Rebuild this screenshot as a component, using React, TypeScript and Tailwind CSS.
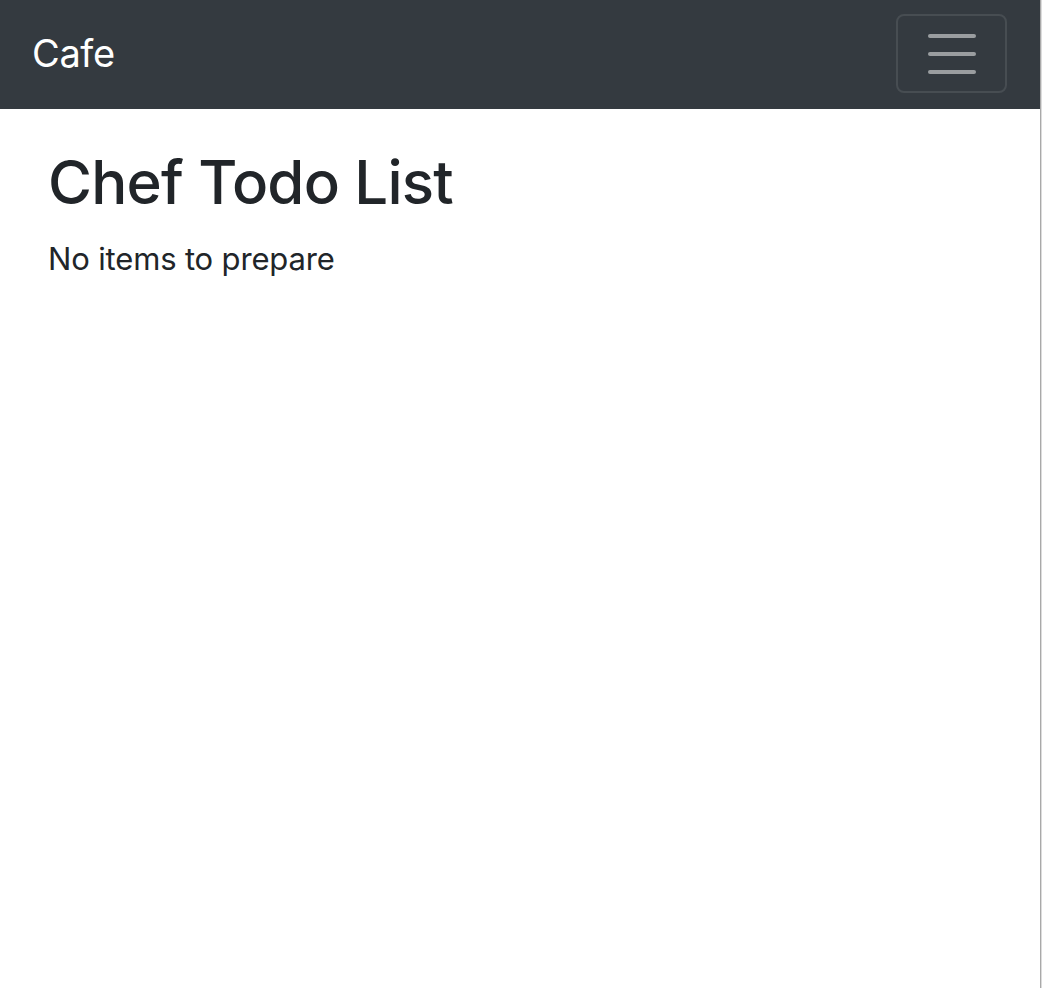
export default function App() {
  return (
    <div className="flex h-[988px] w-[1042px] bg-white" style={{ fontFamily: "Inter, 'Noto Sans', sans-serif" }}>
      <div className="flex-1 flex flex-col">
        <nav className="h-[109px] bg-[#343a40] flex items-center justify-between pl-[32px] pr-[33px]">
          <a className="text-white text-[38px] leading-none tracking-[-0.01em] pb-[4px]">Cafe</a>
          <button className="w-[111px] h-[79px] mb-[2px] rounded-[8px] border-2 border-[#474d52] flex flex-col items-center justify-center gap-[14px]">
            <span className="block w-[48px] h-[4px] rounded-full bg-[#9a9da0]" />
            <span className="block w-[48px] h-[4px] rounded-full bg-[#9a9da0]" />
            <span className="block w-[48px] h-[4px] rounded-full bg-[#9a9da0]" />
          </button>
        </nav>
        <main className="px-[48px] pt-[43px] text-[#212529]">
          <h1 className="text-[60px] leading-none font-medium tracking-[-0.013em]">Chef Todo List</h1>
          <p className="mt-[31px] text-[31px] leading-none tracking-[-0.005em]">No items to prepare</p>
        </main>
      </div>
      <div className="w-[2px] flex">
        <div className="w-px bg-[#a9a9a9]" />
        <div className="w-px bg-[#dcdcdc]" />
      </div>
    </div>
  );
}
